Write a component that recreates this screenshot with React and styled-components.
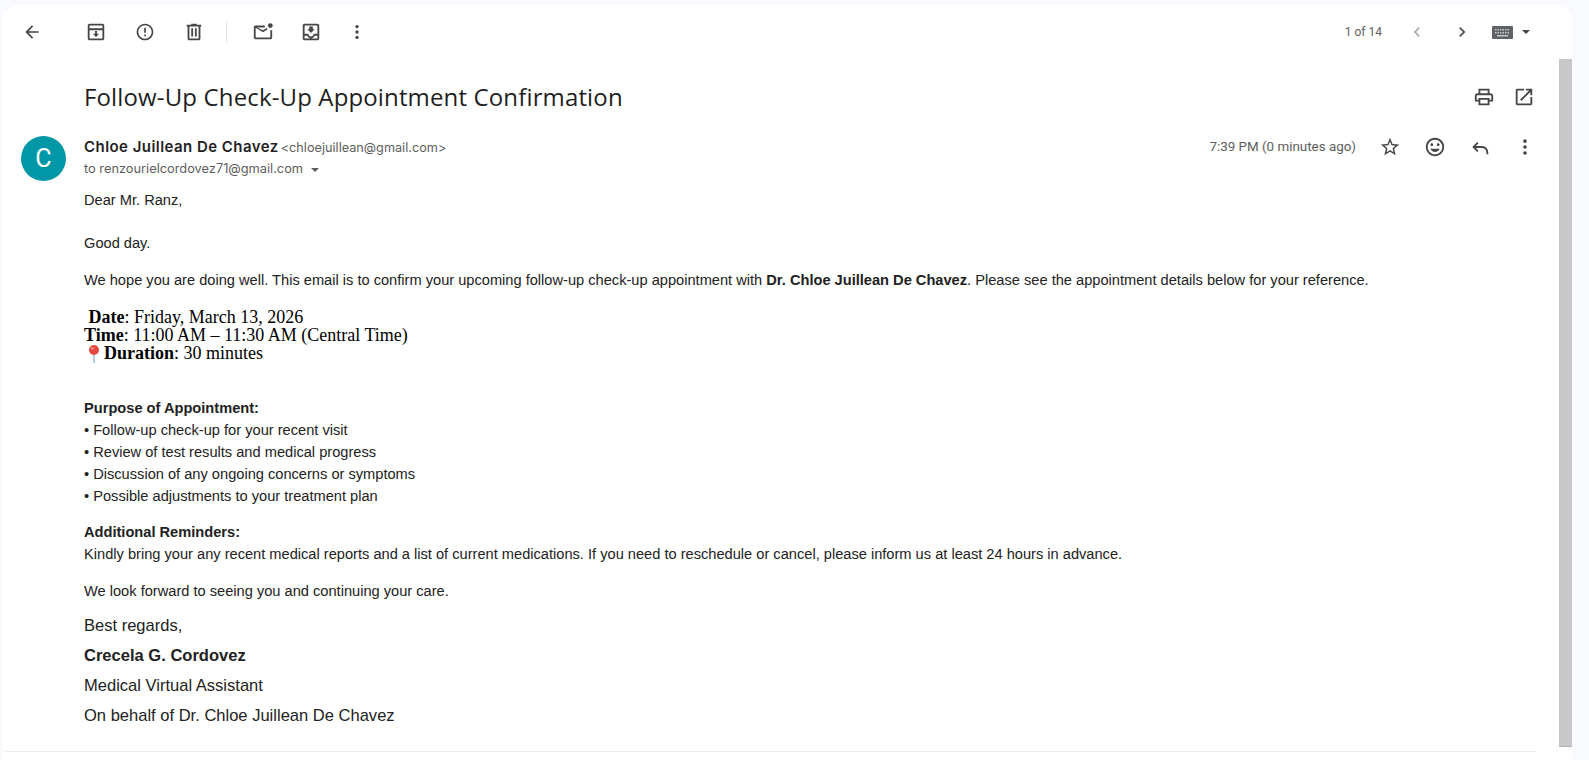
import React from "react";
import styled, { createGlobalStyle } from "styled-components";

const GlobalStyle = createGlobalStyle`
  html, body {
    margin: 0;
    height: 100%;
    overflow: hidden;
    background: #f8fafd;
  }
`;

const Page = styled.div`
  height: 760px;
  padding: 5px 17px 0 3px;
  box-sizing: border-box;
  background: #f8fafd;
`;

const Card = styled.div`
  height: 755px;
  background: #fff;
  border-radius: 16px 16px 0 0;
  overflow: hidden;
`;

const Toolbar = styled.div`
  height: 54px;
  display: flex;
  align-items: center;
  padding: 0 42px 0 19px;
`;

const ToolGroup = styled.div`
  display: flex;
  align-items: center;
  gap: ${(props) => props.$gap || 0}px;
  margin-left: ${(props) => props.$left || 0}px;
`;

const IconSlot = styled.span`
  width: ${(props) => props.$size || 20}px;
  height: ${(props) => props.$size || 20}px;
  display: flex;
  align-items: center;
  justify-content: center;
  flex: none;
  color: ${(props) => props.$color || "#444746"};
  opacity: ${(props) => props.$dim || 1};
  svg {
    display: block;
    width: 100%;
    height: 100%;
    fill: currentColor;
  }
`;

const ToolDivider = styled.div`
  width: 1px;
  height: 22px;
  background: #e3e5e8;
  margin: 0 25px 0 21px;
`;

const Pager = styled.div`
  margin-left: auto;
  display: flex;
  align-items: center;
`;

const PagerText = styled.span`
  font: 12px/16px Roboto, sans-serif;
  color: #5e5e5e;
  margin-right: 25px;
`;

const Chevrons = styled.div`
  display: flex;
  gap: 25px;
  margin-right: 20px;
`;

const KeyboardIcon = styled.svg`
  width: 21px;
  height: 13px;
  display: block;
`;

const Caret = styled.span`
  width: 0;
  height: 0;
  margin-left: 9px;
  border: 4px solid transparent;
  border-top: 4px solid #444746;
  border-bottom: 0;
`;

const Body = styled.div`
  display: flex;
  align-items: flex-start;
`;

const Content = styled.div`
  flex: 1;
  min-width: 0;
`;

const Scrollbar = styled.div`
  width: 13px;
  height: 688px;
  background: #c8c8c8;
  border-bottom: 1px solid #b0b0b0;
  box-sizing: border-box;
  flex: none;
`;

const SubjectRow = styled.div`
  display: flex;
  align-items: center;
  height: 28px;
  padding: 24px 24px 0 81px;
`;

const Subject = styled.h1`
  margin: 0;
  font: 400 24px/28px "Open Sans", sans-serif;
  color: #1f1f1f;
  flex: 1;
  letter-spacing: 0.14px;
`;

const SubjectActions = styled.div`
  display: flex;
  gap: 18px;
`;

const MessageHead = styled.div`
  display: flex;
  padding: 25px 23px 0 18px;
`;

const Avatar = styled.div`
  width: 45px;
  height: 45px;
  border-radius: 50%;
  background: #0097a7;
  color: #fff;
  font: 400 25px/45px Roboto, sans-serif;
  text-align: center;
  flex: none;
`;

const Sender = styled.div`
  margin-left: 18px;
  margin-top: 1px;
  flex: 1;
`;

const SenderLine = styled.div`
  font: 15px/20px Inter, sans-serif;
  color: #5e5e5e;
  height: 20px;
`;

const SenderName = styled.span`
  font-weight: 600;
  color: #1f1f1f;
  letter-spacing: 0.45px;
`;

const SenderMail = styled.span`
  font-size: 12.7px;
  margin-left: 2px;
`;

const ToLine = styled.div`
  display: flex;
  align-items: center;
  margin-top: 3px;
  font: 12.8px/18px Inter, sans-serif;
  color: #5e5e5e;
`;

const ToCaret = styled.span`
  width: 0;
  height: 0;
  margin-left: 8px;
  margin-top: 2px;
  border: 4px solid transparent;
  border-top: 4px solid #5e5e5e;
  border-bottom: 0;
`;

const MetaSide = styled.div`
  display: flex;
  align-items: center;
  height: 20px;
  margin-top: 1px;
`;

const TimeStamp = styled.span`
  font: 13.4px/20px Roboto, sans-serif;
  color: #5e5e5e;
  margin-right: 23px;
`;

const MetaIcons = styled.div`
  display: flex;
  gap: 23px;
`;

const Mail = styled.div`
  padding: 0 0 0 81px;
  margin-top: 8px;
  font-family: "Liberation Sans", Arial, sans-serif;
  font-size: 14.63px;
  color: #222;
`;

const Para = styled.p`
  margin: ${(props) => props.$top || 0}px 0 0;
  line-height: 22px;
  font-weight: ${(props) => (props.$bold ? 700 : 400)};
`;

const Details = styled.div`
  margin-top: 17px;
  font-family: "Liberation Serif", "Times New Roman", serif;
  font-size: 18px;
  line-height: 18px;
  color: #000;
`;

const DetailLine = styled.div`
  white-space: pre;
  height: 18.2px;
`;

const PinIcon = styled.svg`
  width: 16px;
  height: 20px;
  vertical-align: -5px;
  margin-left: 2px;
  margin-right: 2px;
`;

const Signature = styled.div`
  margin-top: 9px;
  font-size: 16.55px;
  line-height: 29.8px;
`;

const SignatureName = styled.div`
  font-weight: 700;
`;

const BottomRule = styled.div`
  height: 1px;
  margin: 21px 0 0 2px;
  background: #ececec;
  width: 1530px;
`;

const Icon = ({ d, size, color, dim, children }) => (
  <IconSlot $size={size} $color={color} $dim={dim}>
    <svg viewBox="0 0 24 24">
      {d && <path d={d} />}
      {children}
    </svg>
  </IconSlot>
);

const MoreDots = () => (
  <>
    <circle cx="12" cy="5.5" r="2" />
    <circle cx="12" cy="12" r="2" />
    <circle cx="12" cy="18.5" r="2" />
  </>
);

const Keyboard = () => (
  <KeyboardIcon viewBox="0 0 21 13">
    <rect width="21" height="13" rx="1" fill="#5f6368" />
    {[3, 5.5, 8, 10.5, 13, 15.5].map((x) => (
      <rect key={x} x={x} y="3" width="1.5" height="1.5" fill="#c4c7c5" />
    ))}
    {[3, 5.5, 8, 10.5, 13, 15.5].map((x) => (
      <rect key={x} x={x} y="6" width="1.5" height="1.5" fill="#c4c7c5" />
    ))}
    <rect x="5" y="9" width="11" height="1.5" fill="#c4c7c5" />
  </KeyboardIcon>
);

const Pin = () => (
  <PinIcon viewBox="0 0 16 20">
    <rect x="7.2" y="8" width="1.6" height="11" fill="#9cc4d8" />
    <circle cx="8" cy="6" r="5" fill="#e8483f" />
    <circle cx="6.4" cy="4.4" r="1.2" fill="#f7a39c" />
  </PinIcon>
);

const App = () => {
  return (
    <Page>
      <GlobalStyle />
      <Card>
        <Toolbar>
          <Icon d="M20 11H7.83l5.59-5.59L12 4l-8 8 8 8 1.41-1.41L7.83 13H20v-2z" />
          <ToolGroup $left={43} $gap={28}>
            <Icon d="M19 3H5c-1.1 0-2 .9-2 2v14c0 1.1.9 2 2 2h14c1.1 0 2-.9 2-2V5c0-1.1-.9-2-2-2zM5 5h14v3H5V5zm0 14v-9h14v9H5zm8-8h-2v3H8.5l3.5 3.5 3.5-3.5H13v-3z" size={22} />
            <Icon d="M12 2C6.48 2 2 6.48 2 12s4.48 10 10 10 10-4.48 10-10S17.52 2 12 2zm0 18c-4.41 0-8-3.59-8-8s3.59-8 8-8 8 3.59 8 8-3.59 8-8 8zM11 7h2v6h-2zm0 8h2v2h-2z" />
            <Icon d="M15 4V3H9v1H4v2h1v13c0 1.1.9 2 2 2h10c1.1 0 2-.9 2-2V6h1V4h-5zm2 15H7V6h10v13zM9 8h2v9H9zm4 0h2v9h-2z" size={22} />
          </ToolGroup>
          <ToolDivider />
          <ToolGroup $gap={26}>
            <Icon d="M14 5H4c-1.1 0-2 .9-2 2v11c0 1.1.9 2 2 2h16c1.1 0 2-.9 2-2V10h-2v8H4V7.4l8 5 5-3.1-1-1.7-4 2.5L5.500 7H14z" size={22}>
              <circle cx="20" cy="5" r="2.6" />
            </Icon>
            <Icon d="M19 3H5c-1.1 0-2 .9-2 2v14c0 1.1.9 2 2 2h14c1.1 0 2-.9 2-2V5c0-1.1-.9-2-2-2zm0 2v9h-4c0 1.66-1.34 3-3 3s-3-1.34-3-3H5V5h14zM5 19v-3h2.8c.9 1.2 2.500 3 4.200 3s3.300-1.800 4.200-3H19v3H5zm11-10h-2V6h-4v3H8l4 4 4-4z" size={22} />
            <ToolGroup $left={-1}>
              <Icon size={20}><MoreDots /></Icon>
            </ToolGroup>
          </ToolGroup>
          <Pager>
            <PagerText>1 of 14</PagerText>
            <Chevrons>
              <Icon d="M15.41 7.41 14 6l-6 6 6 6 1.41-1.41L10.83 12z" dim={0.45} />
              <Icon d="M8.59 16.59 10 18l6-6-6-6-1.41 1.41L13.17 12z" />
            </Chevrons>
            <Keyboard />
            <Caret />
          </Pager>
        </Toolbar>
        <Body>
          <Content>
            <SubjectRow>
              <Subject>Follow-Up Check-Up Appointment Confirmation</Subject>
              <SubjectActions>
                <Icon d="M19 8h-1V3H6v5H5c-1.66 0-3 1.34-3 3v6h4v4h12v-4h4v-6c0-1.66-1.34-3-3-3zM8 5h8v3H8V5zm8 14H8v-4h8v4zm2-4v-2H6v2H4v-4c0-.55.45-1 1-1h14c.55 0 1 .45 1 1v4h-2z" size={22} />
                <Icon d="M19 19H5V5h7V3H5c-1.11 0-2 .9-2 2v14c0 1.1.89 2 2 2h14c1.1 0 2-.9 2-2v-7h-2v7zM14 3v2h3.59l-9.83 9.83 1.41 1.41L19 6.41V10h2V3h-7z" size={22} />
              </SubjectActions>
            </SubjectRow>
            <MessageHead>
              <Avatar>C</Avatar>
              <Sender>
                <SenderLine>
                  <SenderName>Chloe Juillean De Chavez</SenderName>
                  <SenderMail>&lt;chloejuillean@gmail.com&gt;</SenderMail>
                </SenderLine>
                <ToLine>
                  to renzourielcordovez71@gmail.com
                  <ToCaret />
                </ToLine>
              </Sender>
              <MetaSide>
                <TimeStamp>7:39 PM (0 minutes ago)</TimeStamp>
                <MetaIcons>
                  <Icon d="M22 9.24l-7.19-.62L12 2 9.19 8.63 2 9.24l5.46 4.73L5.82 21 12 17.27 18.18 21l-1.63-7.03L22 9.24zM12 15.4l-3.76 2.27 1-4.28-3.32-2.88 4.38-.38L12 6.1l1.71 4.04 4.38.38-3.32 2.88 1 4.28L12 15.4z" size={22} />
                  <Icon d="M11.99 2C6.47 2 2 6.48 2 12s4.47 10 9.99 10C17.52 22 22 17.52 22 12S17.52 2 11.99 2zM12 20c-4.42 0-8-3.58-8-8s3.58-8 8-8 8 3.58 8 8-3.58 8-8 8zm3.500-9c.83 0 1.500-.67 1.500-1.500S16.330 8 15.500 8 14 8.670 14 9.500s.67 1.500 1.500 1.500zm-7 0c.83 0 1.500-.67 1.500-1.500S9.330 8 8.500 8 7 8.670 7 9.500 7.670 11 8.500 11zm3.500 6.500c2.330 0 4.300-1.460 5.110-3.500H6.890c.8 2.040 2.780 3.500 5.110 3.500z" size={22} />
                  <Icon d="M9 17.400 3.600 12 9 6.600l1.400 1.400-3 3H14c3.900 0 7 3.100 7 7v2h-2v-2c0-2.800-2.200-5-5-5H7.400l3 3L9 17.400z" size={22} />
                  <Icon size={22}><MoreDots /></Icon>
                </MetaIcons>
              </MetaSide>
            </MessageHead>
            <Mail>
              <Para>Dear Mr. Ranz,</Para>
              <Para $top={21}>Good day.</Para>
              <Para $top={15}>
                We hope you are doing well. This email is to confirm your upcoming follow-up check-up appointment with{" "}
                <b>Dr. Chloe Juillean De Chavez</b>. Please see the appointment details below for your reference.
              </Para>
              <Details>
                <DetailLine> <b>Date</b>: Friday, March 13, 2026</DetailLine>
                <DetailLine><b>Time</b>: 11:00 AM – 11:30 AM (Central Time)</DetailLine>
                <DetailLine><Pin /><b>Duration</b>: 30 minutes</DetailLine>
              </Details>
              <Para $top={34.6} $bold>Purpose of Appointment:</Para>
              <Para>• Follow-up check-up for your recent visit</Para>
              <Para>• Review of test results and medical progress</Para>
              <Para>• Discussion of any ongoing concerns or symptoms</Para>
              <Para>• Possible adjustments to your treatment plan</Para>
              <Para $top={14} $bold>Additional Reminders:</Para>
              <Para>
                Kindly bring your any recent medical reports and a list of current medications. If you need to reschedule or cancel, please inform us at least 24 hours in advance.
              </Para>
              <Para $top={15}>We look forward to seeing you and continuing your care.</Para>
              <Signature>
                <div>Best regards,</div>
                <SignatureName>Crecela G. Cordovez</SignatureName>
                <div>Medical Virtual Assistant</div>
                <div>On behalf of Dr. Chloe Juillean De Chavez</div>
              </Signature>
            </Mail>
            <BottomRule />
          </Content>
          <Scrollbar />
        </Body>
      </Card>
    </Page>
  );
};

export default App;
